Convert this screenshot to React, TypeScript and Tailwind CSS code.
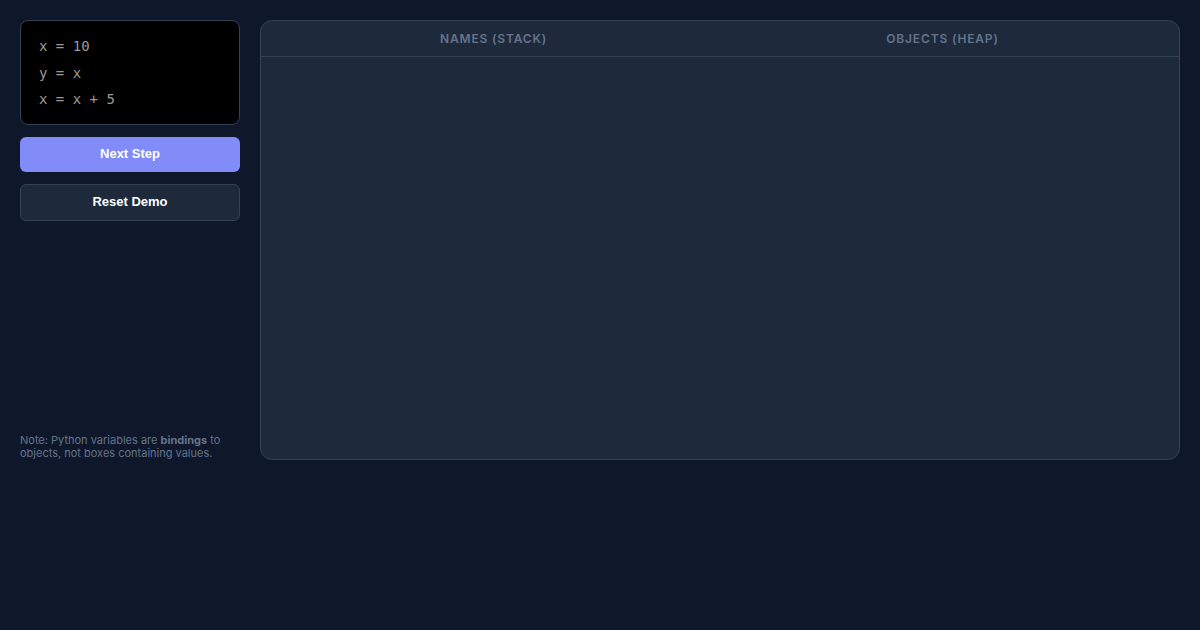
// App.tsx

const code = ["x = 10", "y = x", "x = x + 5"];

export default function App() {
  return (
    <div className="min-h-screen w-full bg-[#0f172a] p-5 font-['Inter',sans-serif]">
      <div className="flex gap-5 h-[440px]">

        {/* LEFT COLUMN */}
        <div className="w-[220px] flex flex-col justify-between">
          <div className="flex flex-col">
            <div className="bg-black border border-[#334155] rounded-lg px-[18px] pt-[12px] pb-[11px]">
              {code.map((line, i) => (
                <div
                  key={i}
                  className="font-['DejaVu_Sans_Mono',monospace] text-[14px] leading-[26.5px] text-[#9a9a9a] whitespace-pre"
                >
                  {line}
                </div>
              ))}
            </div>

            <button
              type="button"
              className="mt-3 h-[35px] rounded-md bg-[#818cf8] text-white text-[13px] font-bold font-['Liberation_Sans',sans-serif]"
            >
              Next Step
            </button>

            <button
              type="button"
              className="mt-3 h-[37px] rounded-md bg-[#1e293b] border border-[#334155] text-white text-[13px] font-bold font-['Liberation_Sans',sans-serif]"
            >
              Reset Demo
            </button>
          </div>

          <p className="text-[11px] leading-[13px] text-[#64748b]">
            Note: Python variables are <b className="font-bold">bindings</b> to
            objects, not boxes containing values.
          </p>
        </div>

        {/* RIGHT PANEL */}
        <div className="flex-1 bg-[#1e293b] border border-[#334155] rounded-xl overflow-hidden flex flex-col">
          <div className="grid grid-cols-2 pl-[8px] pr-[12px] h-[36px] items-center border-b border-[#334155]">
            <div className="text-center text-[12px] font-semibold tracking-[0.07em] text-[#64748b]">
              NAMES (STACK)
            </div>
            <div className="text-center text-[12px] font-semibold tracking-[0.07em] text-[#64748b]">
              OBJECTS (HEAP)
            </div>
          </div>
          <div className="flex-1" />
        </div>

      </div>
    </div>
  );
}
